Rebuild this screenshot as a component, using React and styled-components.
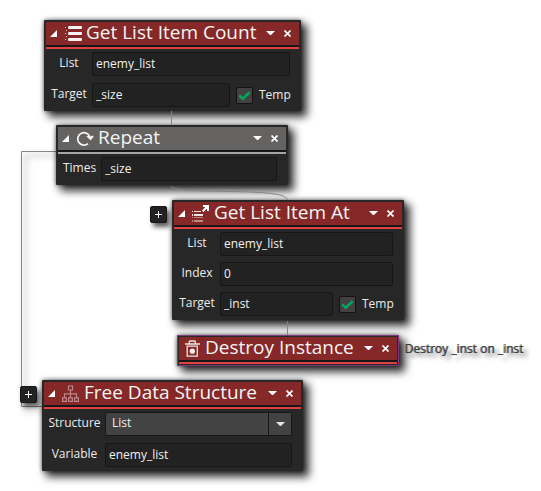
import React, { useId } from "react";
import styled, { createGlobalStyle } from "styled-components";

const GlobalStyle = createGlobalStyle`
  *, *::before, *::after { box-sizing: border-box; }
  body {
    margin: 0;
    background: #ffffff;
    font-family: "Open Sans", "Noto Sans", sans-serif;
  }
`;

const Canvas = styled.main`
  position: relative;
  width: 100%;
  min-height: 100vh;
  overflow: hidden;
`;

const Wires = styled.svg`
  position: absolute;
  top: 0;
  left: 0;
  overflow: visible;
  fill: none;
  stroke: #858585;
  stroke-width: 1px;
`;

const LoopWire = styled.path`
  filter: drop-shadow(4px 4px 3px rgba(0, 0, 0, 0.55));
`;

const Placed = styled.div`
  position: absolute;
  left: ${(p) => p.$x}px;
  top: ${(p) => p.$y}px;
`;

const Card = styled.section`
  width: ${(p) => p.$width}px;
  padding: 2px;
  background: #272727;
  border-radius: 1px;
  outline: ${(p) => (p.$selected ? "1px solid #7d3a7c" : "none")};
  outline-offset: -1px;
  box-shadow: 0 0 4px rgba(0, 0, 0, 0.6), 5px 5px 8px 1px rgba(0, 0, 0, 0.8);
`;

const tones = {
  red: { bar: "#862828", line: "#e04040" },
  gray: { bar: "#646361", line: "#a3a6a6" },
};

const Header = styled.header`
  display: flex;
  align-items: center;
  height: 23px;
  padding: 0 4px 0 ${(p) => (p.$collapsible ? 4 : 5)}px;
  background: ${(p) => tones[p.$tone].bar};
  color: #f4f4f4;
`;

const Title = styled.h2`
  flex: 1;
  margin: 0 0 0 4px;
  font-size: 19px;
  line-height: 20px;
  padding-bottom: 3px;
  font-weight: 400;
  white-space: nowrap;
`;

const IconButton = styled.button`
  display: flex;
  align-items: center;
  justify-content: center;
  width: ${(p) => p.$width}px;
  height: 22px;
  padding: 0;
  border: 0;
  background: none;
  color: #ffffff;
  cursor: pointer;
`;

const Rule = styled.div`
  height: 4px;
  border-top: 2px solid #171717;
  border-bottom: 2px solid ${(p) => tones[p.$tone].line};
`;

const Body = styled.div`
  display: grid;
  row-gap: ${(p) => p.$gap}px;
  padding: 3px 9px 2px 0;
`;

const Row = styled.div`
  display: grid;
  grid-template-columns: ${(p) => p.$label - 2}px 1fr auto;
  align-items: center;
`;

const Label = styled.label`
  font-size: 12px;
  line-height: 22px;
  padding-bottom: 2px;
  color: #ececec;
  text-align: center;
`;

const Field = styled.input`
  width: 100%;
  min-width: 0;
  height: 24px;
  padding: 0 3px 2px;
  border: 1px solid #161616;
  border-radius: 2px;
  background: #222222;
  color: #f0f0f0;
  font: 400 12px/20px "Open Sans", "Noto Sans", sans-serif;
`;

const SelectBox = styled.div`
  position: relative;
`;

const Select = styled.select`
  display: block;
  appearance: none;
  width: 100%;
  height: 24px;
  padding: 0 28px 2px 6px;
  border: 1px solid #161616;
  border-radius: 2px;
  background: #434343;
  color: #f0f0f0;
  font: 400 12px/20px "Open Sans", "Noto Sans", sans-serif;
`;

const SelectArrow = styled.span`
  position: absolute;
  top: 1px;
  right: 1px;
  bottom: 1px;
  display: flex;
  align-items: center;
  justify-content: center;
  width: 23px;
  border-left: 1px solid #161616;
  color: #dfe6e4;
  pointer-events: none;
`;

const Toggle = styled.label`
  display: flex;
  align-items: center;
  gap: 6px;
  width: 60px;
  padding-left: 6px;
  font-size: 12px;
  line-height: 22px;
  color: #ececec;
`;

const CheckBox = styled.span`
  display: grid;
  width: 17px;
  height: 17px;
  border: 1px solid #121212;
  border-radius: 2px;
  background: #424242;

  > * { grid-area: 1 / 1; }
`;

const CheckInput = styled.input`
  width: 15px;
  height: 15px;
  margin: 0;
  opacity: 0;

  &:not(:checked) + svg { visibility: hidden; }
`;

const AddButton = styled.button`
  display: flex;
  align-items: center;
  justify-content: center;
  width: 17px;
  height: 17px;
  padding: 0;
  border: 1px solid #161616;
  border-radius: 2px;
  background: #222222;
  color: #ffffff;
  box-shadow: 3px 4px 5px rgba(0, 0, 0, 0.65);
`;

const Note = styled.p`
  margin: 0;
  font-size: 12px;
  line-height: 16px;
  color: #383838;
  white-space: nowrap;
  text-shadow: -1px 0 0 #777777, 4px 4px 4px rgba(0, 0, 0, 0.6);
`;

const CollapseIcon = () => (
  <svg width="7" height="7" viewBox="0 0 7 7"><path d="M7 0V7H0Z" fill="currentColor" /></svg>
);
const ArrowIcon = () => (
  <svg width="9" height="5" viewBox="0 0 9 5"><path d="M0 0H9L5 4H4Z" fill="currentColor" /></svg>
);
const CloseIcon = () => (
  <svg width="7" height="7" viewBox="0 0 7 7" fill="none" stroke="currentColor" strokeWidth="1.7"><path d="M.5.5L6.5 6.5M6.5.5L.5 6.5" /></svg>
);
const PlusIcon = () => (
  <svg width="7" height="7" viewBox="0 0 7 7" fill="currentColor"><path d="M3 0H4V3H7V4H4V7H3V4H0V3H3Z" /></svg>
);
const CheckIcon = () => (
  <svg width="15" height="15" viewBox="0 0 15 15" fill="none" stroke="#06a45f" strokeWidth="2.6"><path d="M2.3 7.4L5.8 10.7L12.6 4.2" /></svg>
);

const icons = {
  list: (
    <g fill="#f4f4f4">
      <path d="M4 1H16Q17 1 17 2V3Q17 4 16 4H4Q3 4 3 2.5Q3 1 4 1ZM4 7H16Q17 7 17 8V9Q17 10 16 10H4Q3 10 3 8.5Q3 7 4 7ZM4 13H16Q17 13 17 14V15Q17 16 16 16H4Q3 16 3 14.5Q3 13 4 13Z" />
      <path d="M0 2H1V3H0ZM1 5H2V6H1ZM0 8H1V9H0ZM1 11H2V12H1ZM0 14H1V15H0Z" opacity=".75" />
    </g>
  ),
  repeat: (
    <g fill="none" stroke="#f4f4f4" strokeWidth="1.8">
      <path d="M11 13.6A6.2 6.2 0 1 1 12.9 7.2" />
      <path d="M9.4 6.2L11.4 5.6L12.8 7L15.2 5.4L16.8 6.4L13.6 10.4Z" fill="#f4f4f4" stroke="none" />
    </g>
  ),
  itemAt: (
    <g transform="translate(-1 0)">
      <path d="M0 6H1V7H0ZM2 6H9V7H2ZM0 9H1V11H0ZM2 9H11V11H2Z" fill="#efdede" />
      <path d="M0 12H1V13H0ZM2 12H11V13H2ZM0 15H1V17H0ZM2 15H11V17H2Z" fill="#bd8787" />
      <path d="M11 0H17V6H15V3.6L11.5 7L10 5.5L13.4 2H11Z" fill="#ffffff" />
    </g>
  ),
  destroy: (
    <g fill="none" stroke="#f0e4e4" strokeWidth="1.3">
      <path d="M1 4H16M5.2 4V1.7Q5.2 1 6 1H10.5Q11.3 1 11.3 1.7V4M3.2 6.2H13.3V16.2H3.2Z" />
      <circle cx="8.3" cy="11.2" r="2.6" fill="#f8f0f0" stroke="none" />
    </g>
  ),
  structure: (
    <g transform="translate(-1 0)" fill="none" stroke="#bd8787" strokeWidth="1.2">
      <path d="M6.5 1H10.5V5H6.5ZM.6 12.8H4.4V16.4H.6ZM6.6 12.8H10.4V16.4H6.6ZM12.6 12.8H16.4V16.4H12.6ZM8.5 5V12.8M2.5 12.8V8.8H14.5V12.8" />
    </g>
  ),
};

const NodeIcon = ({ name }) => (
  <svg width="17" height="17" viewBox="0 0 17 17" overflow="visible" aria-hidden="true">{icons[name]}</svg>
);

function Node({ title, icon, tone = "red", width, gap = 7, collapsible = true, selected, rows }) {
  return (
    <Card $width={width} $selected={selected}>
      <Header $tone={tone} $collapsible={collapsible}>
        {collapsible && (
          <IconButton $width={7} aria-label={`Collapse ${title}`}><CollapseIcon /></IconButton>
        )}
        {collapsible && <Spacer />}
        <NodeIcon name={icon} />
        <Title>{title}</Title>
        <IconButton $width={18} aria-label={`${title} options`}><ArrowIcon /></IconButton>
        <IconButton $width={16} aria-label={`Close ${title}`}><CloseIcon /></IconButton>
      </Header>
      <Rule $tone={tone} />
      {rows && <Body $gap={gap}>{rows}</Body>}
    </Card>
  );
}

const Spacer = styled.span`
  width: 8px;
`;

function TextRow({ label, value, column, temp }) {
  const id = useId();
  return (
    <Row $label={column}>
      <Label htmlFor={id}>{label}</Label>
      <Field id={id} type="text" defaultValue={value} />
      {temp && (
        <Toggle>
          <CheckBox>
            <CheckInput type="checkbox" defaultChecked />
            <CheckIcon />
          </CheckBox>
          Temp
        </Toggle>
      )}
    </Row>
  );
}

function SelectRow({ label, value, column }) {
  const id = useId();
  return (
    <Row $label={column}>
      <Label htmlFor={id}>{label}</Label>
      <SelectBox>
        <Select id={id} defaultValue={value}><option>{value}</option></Select>
        <SelectArrow><ArrowIcon /></SelectArrow>
      </SelectBox>
    </Row>
  );
}

export default function App() {
  return (
    <>
      <GlobalStyle />
      <Canvas>
        <Wires width="1" height="1" aria-hidden="true">
          <LoopWire d="M56 151.5H21.5V406.5H42" />
        </Wires>
        <Placed $x={44} $y={20}>
          <Node title="Get List Item Count" icon="list" width={257} rows={<>
            <TextRow label="List" value="enemy_list" column={48} />
            <TextRow label="Target" value="_size" column={48} temp />
          </>} />
        </Placed>
        <Placed $x={56} $y={125}>
          <Node title="Repeat" icon="repeat" tone="gray" width={232} rows={
            <TextRow label="Times" value="_size" column={45} />
          } />
        </Placed>
        <Placed $x={150} $y={206}><AddButton aria-label="Add before Get List Item At"><PlusIcon /></AddButton></Placed>
        <Placed $x={172} $y={200}>
          <Node title="Get List Item At" icon="itemAt" width={232} gap={6} rows={<>
            <TextRow label="List" value="enemy_list" column={48} />
            <TextRow label="Index" value="0" column={48} />
            <TextRow label="Target" value="_inst" column={48} temp />
          </>} />
        </Placed>
        <Placed $x={177} $y={335}>
          <Node title="Destroy Instance" icon="destroy" width={222} collapsible={false} selected />
        </Placed>
        <Placed $x={405} $y={341}><Note>Destroy _inst on _inst</Note></Placed>
        <Placed $x={20} $y={386}><AddButton aria-label="Add before Free Data Structure"><PlusIcon /></AddButton></Placed>
        <Placed $x={42} $y={380}>
          <Node title="Free Data Structure" icon="structure" width={261} rows={<>
            <SelectRow label="Structure" value="List" column={63} />
            <TextRow label="Variable" value="enemy_list" column={63} />
          </>} />
        </Placed>
        <Wires width="1" height="1" aria-hidden="true">
          <path d="M171.5 111V125M171.5 186C172 196 287 186 287.5 200M287.5 321V335" />
        </Wires>
      </Canvas>
    </>
  );
}
